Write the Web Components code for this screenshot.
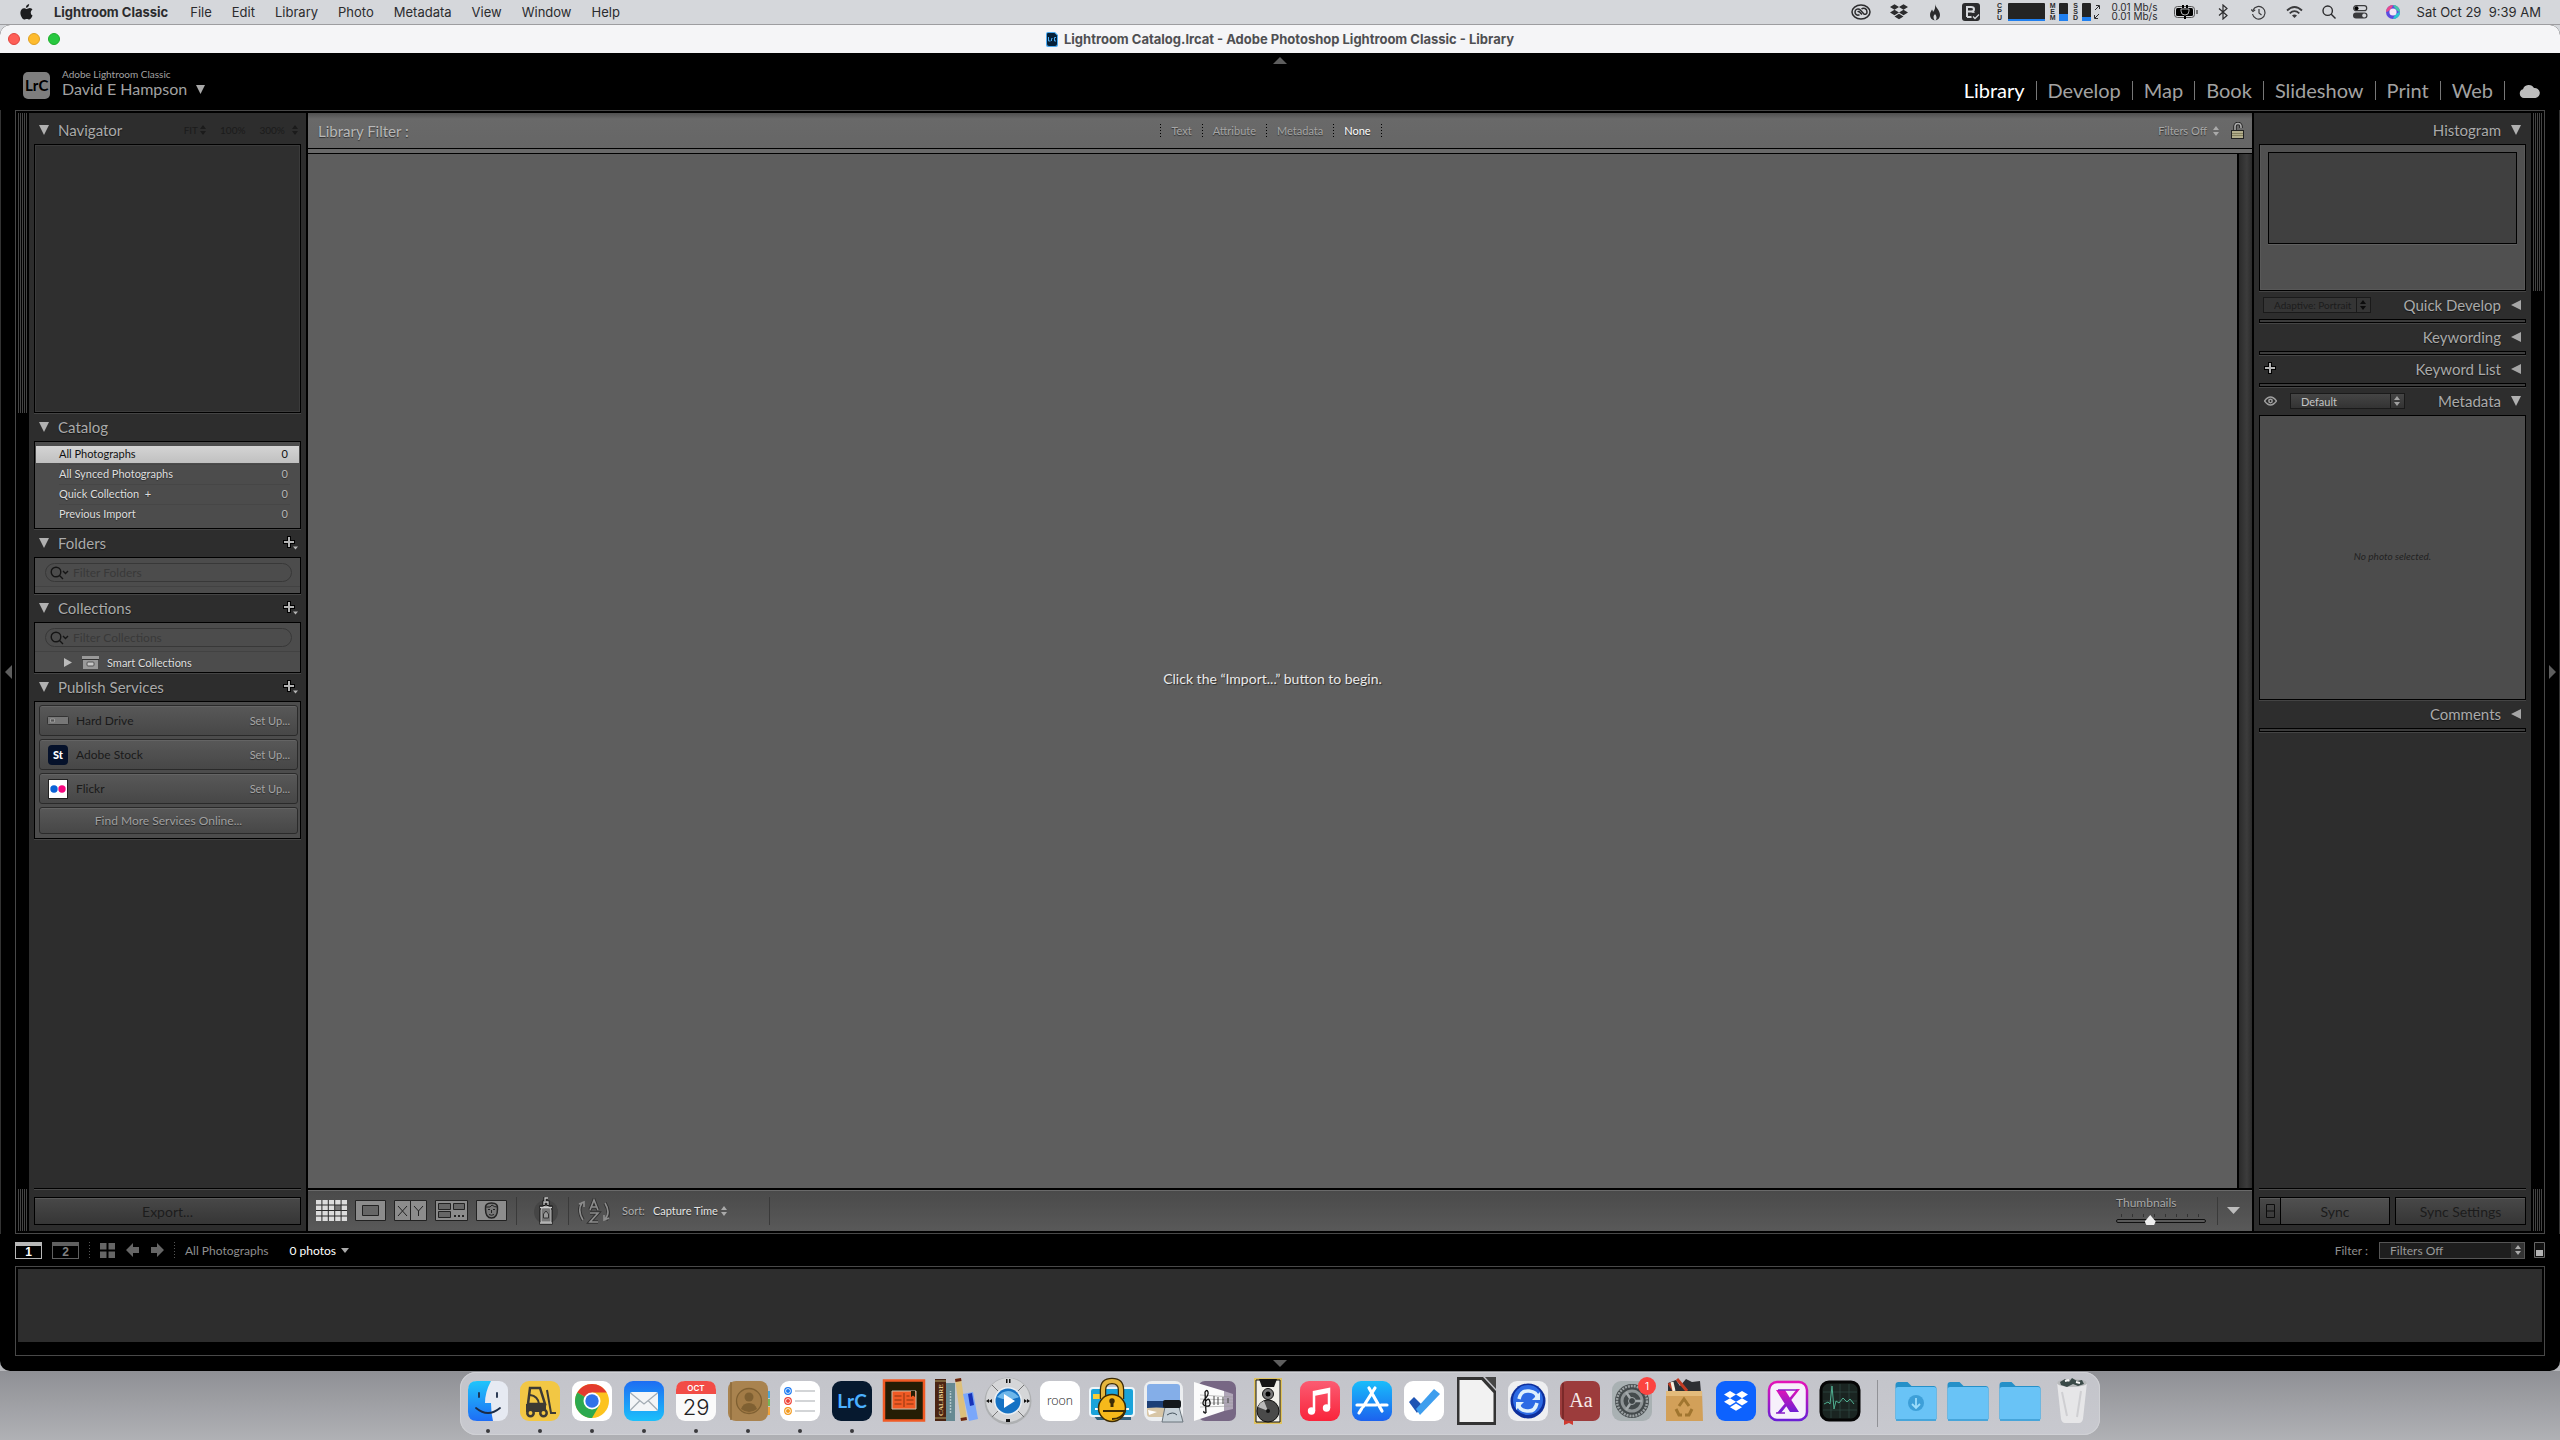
<!DOCTYPE html>
<html lang="en">
<head>
<meta charset="utf-8">
<title>Lightroom Catalog.lrcat - Adobe Photoshop Lightroom Classic - Library</title>
<style>
html, body { margin: 0; height: 100%; }
body { display: flex; flex-direction: column; background: linear-gradient(#d5d7db 0 60px, #b5b6ba 60px); font-family: Lato, "Liberation Sans", sans-serif; font-size: 11px; overflow: hidden; }
lr-window { flex: 1; min-height: 0; }
</style>
</head>
<body>
<mac-menu-bar></mac-menu-bar>
<lr-window>
  <lr-header></lr-header>
  <lr-workspace>
    <lr-left-panel slot="left"></lr-left-panel>
    <lr-library></lr-library>
    <lr-right-panel slot="right"></lr-right-panel>
  </lr-workspace>
  <lr-filmstrip></lr-filmstrip>
</lr-window>
<mac-dock></mac-dock>

<script>
const BASE = `
:host, *, *::before, *::after { box-sizing: border-box; }
svg { display: block; flex: none; }
button, input, select { font: inherit; color: inherit; margin: 0; padding: 0; border: 0; background: none; border-radius: 0; text-align: inherit; }
select { appearance: none; }
a { color: inherit; text-decoration: none; }
ul { list-style: none; margin: 0; padding: 0; }
p, h1, h2 { margin: 0; font-weight: inherit; font-size: inherit; }
.grow { flex: 1; }
.dots { width: 1px; height: 14px; background: repeating-linear-gradient(#000 0 1px, transparent 1px 3px); }
`;
function define(name, css, html, setup) {
  const template = document.createElement('template');
  template.innerHTML = `<style>${BASE}${css}</style>${html}`;
  customElements.define(name, class extends HTMLElement {
    constructor() {
      super();
      this.attachShadow({ mode: 'open' }).append(template.content.cloneNode(true));
    }
    connectedCallback() { if (setup) setup.call(this, this.shadowRoot); }
  });
}
const UPDOWN = (c = '#bbb') => `<svg width="6" height="10" viewBox="0 0 6 10" fill="${c}"><path d="M3 0l3 4H0zM3 10l3-4H0z"/></svg>`;
const DROPBOX = c => `<path fill="${c}" d="M5 0l5 3-5 3-5-3zM15 0l5 3-5 3-5-3zM5 6l5 3-5 3-5-3zM15 6l5 3-5 3-5-3zM10 10.500l5 3-5 3-5-3z"/>`;

/* ---------- Menu bar ---------- */
define('mac-menu-bar', `
:host { display: flex; align-items: center; height: 25px; flex: none; padding: 0 19px 0 20px; background: #d5d7db; border-bottom: 1px solid #9d9da0; color: #2b2b2d; font: 13px/24px Inter, "Liberation Sans", sans-serif; }
nav { display: flex; gap: 20px; margin-left: 21px; }
nav a:first-child { font-weight: 700; margin-right: 2px; }
.status { display: flex; align-items: center; margin-left: auto; }
.cell { display: flex; justify-content: center; align-items: center; width: 36px; }
.cell.first { width: 40px; }
.cell.narrow { width: 32px; }
.stack { font: 700 7px/6px "Liberation Sans", sans-serif; width: 6px; text-align: center; white-space: pre-line; margin-left: 2px; }
.stack.cpu { margin-left: 8px; }
.meter { width: 9px; height: 18px; background: #242424; border-radius: 1px; display: flex; align-items: flex-end; margin: 0 3px; }
.meter.wide { width: 37px; margin-left: 5px; }
.meter i { display: block; width: 100%; background: #1f7ff0; }
.rate { font-size: 10px; line-height: 9px; margin: 0 12px; width: 50px; }
time { margin-left: 8px; white-space: pre; }
`, `
<svg width="13" height="16" viewBox="0 0 14 17" fill="#1d1d1f"><path d="M9.800 0c.1 1.100-.3 2.100-.9 2.800-.7.8-1.600 1.300-2.500 1.200-.1-1 .4-2 .9-2.700C8 .6 9 .1 9.800 0zM13.500 12.400c-.6 1.800-2 4.200-3.400 4.200-1 0-1.500-.6-2.800-.6s-1.700.6-2.700.6C2.900 16.600.4 12.700.4 9.300c0-3.100 2-4.900 3.900-4.900 1.200 0 2.200.8 3 .8.700 0 1.900-.9 3.400-.9 1 .1 2 .5 2.700 1.500-2.600 1.700-2.200 5.300.1 6.600z"/></svg>
<nav aria-label="Menu"><a href="#">Lightroom Classic</a><a href="#">File</a><a href="#">Edit</a><a href="#">Library</a><a href="#">Photo</a><a href="#">Metadata</a><a href="#">View</a><a href="#">Window</a><a href="#">Help</a></nav>
<div class="status">
  <div class="cell first"><svg width="20" height="16" viewBox="0 0 20 16" fill="none" stroke="#2b2b2d" stroke-width="1.500"><ellipse cx="10" cy="8" rx="9" ry="7"/><path d="M8.500 10.800c-2.500 1-4.500-.5-4.500-2.800 0-3 3.500-4 5.500-1.800l3.200 3.600c1.500 1.200 3.300.2 3.300-1.800 0-3.500-3.500-4.700-5.500-3"/><path d="M6.800 8.200c.5-1 1.300-.8 2 0L11 10.600"/></svg></div>
  <div class="cell"><svg width="18" height="16" viewBox="0 0 20 17">${DROPBOX('#2b2b2d')}</svg></div>
  <div class="cell"><svg width="12" height="17" viewBox="0 0 12 17"><path fill="#2b2b2d" d="M6 0c.5 3.500 5 6 5 11 0 3-2 5-4.500 5.500C8 15 8 12 6 10c-.5 1-1.500 1.500-1.500 3 0 1.500.7 2.500 1.200 3.500C3 16 1 14 1 11c0-3 1.500-4 2-5.500.7.700 1 1.500 1 2.500C6 6 6.500 3 6 0z"/></svg></div>
  <div class="cell"><svg width="18" height="18" viewBox="0 0 18 18"><rect width="18" height="18" rx="3" fill="#2b2b2d"/><path d="M5 3v11M5 4h4c4 0 4 4.500 0 4.500H5M9 8.500c5 0 4 5.500 0 5.500H5" stroke="#d5d7db" stroke-width="2" fill="none"/><circle cx="13.500" cy="13.500" r="4" fill="#2b2b2d"/><path d="M11 13.500l2 2 4-4" stroke="#d5d7db" stroke-width="1.300" fill="none"/></svg></div>
  <div class="stack cpu">C
P
U</div><div class="meter wide"><i style="height:2px"></i></div>
  <div class="stack">M
E
M</div><div class="meter"><i style="height:7px"></i></div>
  <div class="stack">S
S
D</div><div class="meter"><i style="height:4px"></i></div>
  <svg width="6" height="14" viewBox="0 0 6 14" stroke="#2b2b2d" fill="none"><path d="M1 5l4-4M2 .5h3.500V4M5 9l-4 4M.5 10v3.500H4"/></svg>
  <div class="rate">0.01 Mb/s<br>0.01 Mb/s</div>
  <svg width="25" height="14" viewBox="0 0 25 14"><rect x=".5" y="1.500" width="20" height="11" rx="3" fill="#d5d7db" stroke="#555"/><rect x="2" y="3" width="17" height="8" rx="1.500"/><path d="M23 5v4" stroke="#555" stroke-width="1.500"/><path d="M9 0v4M13 0v4M11 9v5" stroke="#000" stroke-width="2"/><path d="M7 4h8v2q0 4-4 4T7 6z" stroke="#d5d7db" stroke-width=".8"/></svg>
  <div class="cell" style="margin-left:6px"><svg width="10" height="16" viewBox="0 0 10 16" fill="none" stroke="#2b2b2d" stroke-width="1.200"><path d="M1 4.500l8 7L5 15V1l4 3.500-8 7"/></svg></div>
  <div class="cell"><svg width="15" height="15" viewBox="0 0 15 15" fill="none" stroke="#3a3a3c" stroke-width="1.200"><path d="M2 5a6.300 6.300 0 1 1-.5 4"/><path d="M.2 4.500L2 6.500l2.200-1.700M8 4v4l2.500 2"/></svg></div>
  <div class="cell"><svg width="17" height="13" viewBox="0 0 17 13" fill="none" stroke="#3a3a3c" stroke-width="1.800"><path d="M1 4.500q7.500-7 15 0M3.700 7.300q4.800-4.300 9.600 0"/><path d="M6 9.500q2.500-2 5 0L8.500 12z" fill="#3a3a3c" stroke="none"/></svg></div>
  <div class="cell narrow"><svg width="14" height="14" viewBox="0 0 14 14" fill="none" stroke="#2b2b2d" stroke-width="1.400"><circle cx="5.700" cy="5.700" r="4.700"/><path d="M9 9l4.500 4.500"/></svg></div>
  <div class="cell narrow"><svg width="15" height="14" viewBox="0 0 15 14"><rect x=".7" y=".7" width="13" height="5" rx="2.500" fill="none" stroke="#3a3a3c" stroke-width="1.200"/><circle cx="3.500" cy="3.200" r="2"/><rect y="7.500" width="14.500" height="6" rx="3" fill="#3a3a3c"/><circle cx="11.200" cy="10.500" r="2" fill="#d5d7db"/></svg></div>
  <div class="cell narrow"><svg width="14" height="14" viewBox="0 0 14 14"><circle cx="7" cy="7" r="7" fill="#5a4be0"/><path d="M7 0a7 7 0 0 0-7 7c2 0 6-3 7-7z" fill="#e64a8d"/><path d="M7 14a7 7 0 0 0 7-7c-2 0-6 3-7 7z" fill="#2bc5cf"/><path d="M7 0a7 7 0 0 1 7 7c-2 0-5-3-7-7z" fill="#42c7a8"/><circle cx="7" cy="7" r="3.600" fill="#f4e8f6"/></svg></div>
  <time>Sat Oct 29  9:39 AM</time>
</div>`);

/* ---------- Application window ---------- */
define('lr-window', `
:host { display: flex; flex-direction: column; background: #000; border-radius: 10px; overflow: hidden; }
.title { display: flex; align-items: center; height: 28px; flex: none; background: #f5f5f7; color: #4f4f52; font: 700 13px/28px Inter, "Liberation Sans", sans-serif; padding: 0 8px; }
.lights { display: flex; gap: 8px; flex: 1; }
.lights button { width: 12px; height: 12px; border-radius: 50%; background: #fe5f57; border: 1px solid #e0443e; }
.lights button:nth-child(2) { background: #febb2e; border-color: #dfa023; }
.lights button:nth-child(3) { background: #28c840; border-color: #1dad2b; }
h1 { display: flex; align-items: center; gap: 6px; }
`, `
<div class="title"><div class="lights"><button aria-label="Close"></button><button aria-label="Minimize"></button><button aria-label="Zoom"></button></div>
<h1><svg width="12" height="15" viewBox="0 0 12 15"><path d="M2 0h7l3 3v10q0 2-2 2H2q-2 0-2-2V2q0-2 2-2z" fill="#4ba9f0"/><path d="M2 1h6.500L11 3.500V12q0 2-2 2H3q-2 0-2-2V2q0-1 1-1z" fill="#062038"/><path d="M2.500 5v4h2M5.500 9V6.500h1M10 5.500H8.500v3.500H10" stroke="#4ba9f0" fill="none"/></svg>Lightroom Catalog.lrcat - Adobe Photoshop Lightroom Classic - Library</h1><div class="grow"></div></div>
<slot></slot>`);

define('lr-header', `
:host { display: block; height: 57px; flex: none; color: #a2a2a2; }
.tab { display: flex; justify-content: center; height: 11px; align-items: flex-end; }
.row { display: flex; align-items: center; padding: 0 20px 0 23px; height: 43px; }
.id { margin: 0 0 4px 12px; line-height: 16px; }
.id small { display: block; font-size: 10px; line-height: 11px; }
.id button { display: flex; align-items: center; gap: 9px; font-size: 16px; line-height: 18px; }
nav { display: flex; align-items: center; margin-left: auto; padding-top: 10px; font-size: 20px; line-height: 24px; }
nav a { padding: 0 11px; border-right: 1px solid #777; line-height: 19px; }
nav a.on { color: #fff; }
nav svg { margin-left: 14px; }
`, `
<div class="tab"><svg width="14" height="7" viewBox="0 0 14 7"><path d="M7 0l7 7H0z" fill="#5e5e5e"/></svg></div>
<div class="row">
<svg width="27" height="27" viewBox="0 0 27 27"><rect width="27" height="27" rx="5" fill="#7e7e7e"/><text x="2" y="19" font-family="Lato" font-size="15" font-weight="700" fill="#000">LrC</text></svg>
<div class="id"><small>Adobe Lightroom Classic</small><button>David E Hampson<svg width="9" height="9" viewBox="0 0 9 9"><path d="M0 0h9L4.500 9z" fill="#a8a8a8"/></svg></button></div>
<nav><a class="on" href="#">Library</a><a href="#">Develop</a><a href="#">Map</a><a href="#">Book</a><a href="#">Slideshow</a><a href="#">Print</a><a href="#">Web</a>
<svg width="21" height="14" viewBox="0 0 21 14"><path d="M5 14a4.500 4.500 0 0 1-1-8.800A6 6 0 0 1 15 4a5 5 0 0 1 1.500 10z" fill="#bcbcbc"/></svg></nav>
</div>`);

define('lr-workspace', `
:host { display: flex; flex: 1; min-height: 0; }
.edge { width: 15px; flex: none; display: flex; align-items: center; justify-content: center; border: 0 solid #333; }
.edge.l { border-left-width: 1px; }
.edge.r { border-right-width: 1px; }
.frame { flex: 1; min-width: 0; display: flex; border: 1px solid #484848; padding: 2px 0; gap: 2px; }
.side { display: flex; }
.strip { width: 13px; display: flex; flex-direction: column; justify-content: space-between; align-items: center; }
.strip i { width: 9px; height: 42px; background: repeating-linear-gradient(90deg, #444 0 1px, #000 1px 2px); }
.strip i:first-child { height: 300px; }
.right .strip i:first-child { height: 178px; }
`, `
<div class="edge l"><svg width="7" height="14" viewBox="0 0 7 14"><path d="M7 0v14L0 7z" fill="#5e5e5e"/></svg></div>
<div class="frame">
<div class="side left"><div class="strip"><i></i><i></i></div><slot name="left"></slot></div>
<slot></slot>
<div class="side right"><slot name="right"></slot><div class="strip"><i></i><i></i></div></div>
</div>
<div class="edge r"><svg width="7" height="14" viewBox="0 0 7 14"><path d="M0 0v14l7-7z" fill="#5e5e5e"/></svg></div>`);

/* ---------- Collapsible panel section ---------- */
define('lr-section', `
:host { display: block; }
header { display: flex; align-items: center; height: 28px; padding: 0 3px 0 5px; color: #aaa; }
h2 { font-size: 15px; line-height: 24px; }
h2 button { display: flex; align-items: center; gap: 9px; text-shadow: 0 1px 1px #0008; }
.tools { flex: 1; display: flex; align-items: center; justify-content: flex-end; }
:host([side=right]) header { flex-direction: row-reverse; padding: 0 5px 0 4px; }
:host([side=right]) h2 button { flex-direction: row-reverse; gap: 10px; }
:host([side=right]) .tools { justify-content: flex-start; }
.box { border: 1px solid #000; background: #4c4c4c; box-shadow: 0 1px #444; }
:host([closed]) .box { height: 4px; background: #3c3c3c; }
.open, .shut { display: block; }
:host([closed]) .open, :host(:not([closed])) .shut { display: none; }
`, `
<header><h2><button><svg class="open" width="10" height="10" viewBox="0 0 10 10"><path d="M0 0h10L5 10z" fill="#b0b0b0"/></svg><svg class="shut" width="10" height="10" viewBox="0 0 10 10"><path d="M10 0v10L0 5z" fill="#a5a5a5"/></svg><span></span></button></h2><div class="tools"><slot name="tools"></slot></div></header>
<div class="box"><slot></slot></div>`, function (root) {
  root.querySelector('span').textContent = this.getAttribute('heading');
});

define('lr-plus', `
:host { display: block; } button { display: block; }
`, `<button aria-label="Add"><svg width="15" height="14" viewBox="0 0 15 14"><path d="M6 0v12M0 6h12" stroke="#000" stroke-width="4"/><path d="M6 1v10M1 6h10" stroke="#b4b4b4" stroke-width="2"/><path class="m" d="M10 10.500h5l-2.500 3z" fill="#b4b4b4"/></svg></button>`, function (root) {
  if (this.hasAttribute('plain')) root.querySelector('.m').remove();
});

define('lr-search', `
:host { display: block; padding: 5px 8px 4px 10px; border-bottom: 1px solid #424242; }
label { display: flex; align-items: center; gap: 4px; height: 19px; border: 1px solid #383838; border-radius: 10px; padding: 0 4px; }
input { flex: 1; min-width: 0; height: 17px; outline: 0; font-size: 12px; }
input::placeholder { color: #393939; opacity: 1; }
`, `<label><svg width="19" height="14" viewBox="0 0 19 14" fill="none" stroke="#151515" stroke-width="1.400"><circle cx="6" cy="6" r="4.800"/><path d="M9.500 9.500L13 13M13 5l2.500 2.500L18 5"/></svg><input type="text"></label>`, function (root) {
  const input = root.querySelector('input');
  input.placeholder = this.getAttribute('placeholder');
  input.setAttribute('aria-label', input.placeholder);
});

define('lr-panel-footer', `
:host { display: flex; gap: 5px; border-top: 1px solid #000; box-shadow: inset 0 1px #4a4a4a; padding: 8px 0 6px; margin: auto 5px 0; height: 43px; flex: none; }
`, `<slot></slot>`);

define('lr-button', `
:host { display: flex; flex: 1; }
button { flex: 1; height: 28px; border: 1px solid #000; background: linear-gradient(#484848, #363636); text-align: center; font-size: 14px; color: #1c1c1c; box-shadow: inset 0 1px #5a5a5a; }
:host([switch]) button:last-child { background: linear-gradient(#505050, #3e3e3e); }
.sw { flex: none; width: 21px; border-right: 0; display: flex; align-items: center; justify-content: center; }
:host(:not([switch])) .sw { display: none; }
`, `<button class="sw" aria-label="Auto sync"><svg width="9" height="14" viewBox="0 0 9 14"><path d="M.5.5h8v13h-8zM.5 7h8" fill="none" stroke="#0c0c0c"/></svg></button><button><slot></slot></button>`);

define('lr-left-panel', `
:host { display: flex; flex-direction: column; width: 277px; background: #2d2d2d; padding-top: 3px; }
lr-section { margin: 0 5px; }
.zoom { display: flex; gap: 14px; font-size: 10px; color: #1b1b1b; align-items: center; } .zoom span { display: flex; gap: 2px; align-items: center; }
.nav { height: 267px; background: #2f2f2f; border: 1px solid #3b3b3b; }
.catalog { padding: 2px 0 4px; }
.catalog a { display: flex; justify-content: space-between; height: 20px; line-height: 20px; padding: 0 12px 0 24px; color: #dedede; text-shadow: 0 1px 1px #0006; }
.catalog span:last-child { color: #b5b5b5; }
.catalog li + li a { background: linear-gradient(#464646, #464646) 24px 0 / calc(100% - 34px) 1px no-repeat; }
.catalog a.on { background: linear-gradient(#d4d4d4, #c0c0c0) 1px 2px / calc(100% - 2px) 17px no-repeat; color: #111; text-shadow: none; }
.catalog a.on span:last-child { color: #111; }
.end { height: 6px; }
.tree { display: flex; align-items: center; width: 100%; height: 20px; padding: 0 0 0 29px; color: #dedede; text-shadow: 0 1px 1px #0006; }
.tree svg + svg { margin: 0 8px 0 10px; }
.pub { padding: 3px 2px 4px 4px; display: grid; gap: 3px; }
.pub button { height: 31px; display: flex; align-items: center; border: 1px solid #2a2a2a; border-radius: 3px; background: linear-gradient(#585858, #474747); box-shadow: inset 0 1px #646464; padding: 0 7px; }
.pub b { width: 22px; display: flex; justify-content: center; margin-right: 7px; font-weight: 400; }
.pub .name { flex: 1; font-size: 12px; color: #1a1a1a; }
.pub .set { color: #a6a6a6; font-size: 11px; text-shadow: 0 1px 1px #0006; }
.pub button.more { height: 27px; justify-content: center; font-size: 12px; color: #a0a0a0; text-shadow: 0 1px 1px #0008; }
`, `
<lr-section heading="Navigator"><div class="zoom" slot="tools"><span>FIT ${UPDOWN('#1b1b1b')}</span><span>100%</span><span>300% &nbsp;${UPDOWN('#1b1b1b')}</span></div><div class="nav"></div></lr-section>
<lr-section heading="Catalog"><ul class="catalog"><li><a class="on" href="#"><span>All Photographs</span><span>0</span></a></li><li><a href="#"><span>All Synced Photographs</span><span>0</span></a></li><li><a href="#"><span>Quick Collection &nbsp;+</span><span>0</span></a></li><li><a href="#"><span>Previous Import</span><span>0</span></a></li></ul></lr-section>
<lr-section heading="Folders"><lr-plus slot="tools"></lr-plus><lr-search placeholder="Filter Folders"></lr-search><div class="end"></div></lr-section>
<lr-section heading="Collections"><lr-plus slot="tools"></lr-plus><lr-search placeholder="Filter Collections"></lr-search>
<button class="tree"><svg width="8" height="9" viewBox="0 0 8 9"><path d="M0 0l8 4.500L0 9z" fill="#bbb"/></svg><svg width="17" height="13" viewBox="0 0 17 13"><path d="M0 0h17v3H0zM1 4h15v9H1z" fill="#999"/><path d="M0 3.500h17" stroke="#333"/><rect x="5" y="6" width="7" height="4" rx="1" fill="#c8c8c8" stroke="#555"/></svg>Smart Collections</button></lr-section>
<lr-section heading="Publish Services"><lr-plus slot="tools"></lr-plus><div class="pub">
<button><b><svg width="22" height="9" viewBox="0 0 22 9"><rect x=".5" y=".5" width="21" height="8" rx="1" fill="#777" stroke="#333"/><path d="M3.500 3h4v3h-4z" fill="#555" stroke="#aaa" stroke-width=".7"/></svg></b><span class="name">Hard Drive</span><span class="set">Set Up...</span></button>
<button><b><svg width="20" height="20" viewBox="0 0 20 20"><rect width="20" height="20" rx="4" fill="#05112a"/><text x="10" y="14" text-anchor="middle" font-family="Lato" font-size="11" font-weight="900" fill="#fff">St</text></svg></b><span class="name">Adobe Stock</span><span class="set">Set Up...</span></button>
<button><b><svg width="20" height="20" viewBox="0 0 20 20"><rect width="20" height="20" fill="#222"/><rect x="1" y="1" width="18" height="18" fill="#fff"/><circle cx="6" cy="10" r="3.700" fill="#0b62d6"/><circle cx="14" cy="10" r="3.700" fill="#f7087f"/></svg></b><span class="name">Flickr</span><span class="set">Set Up...</span></button>
<button class="more">Find More Services Online...</button></div></lr-section>
<lr-panel-footer><lr-button>Export...</lr-button></lr-panel-footer>`);

define('lr-right-panel', `
:host { display: flex; flex-direction: column; width: 277px; background: #2d2d2d; padding-top: 3px; }
lr-section { margin: 0 5px; }
.hist { height: 145px; padding: 7px; border: 1px solid #585858; background: #505050; border-top-width: 0; }
.hist div { height: 92px; border: 1px solid #000; background: #404040; box-shadow: 0 1px #606060; }
.meta { height: 283px; display: flex; align-items: center; justify-content: center; padding-bottom: 4px; font-style: italic; font-size: 10px; color: #222; }
.pick { position: relative; display: flex; align-items: center; height: 16px; border: 1px solid #1a1a1a; background: linear-gradient(#454545, #333); width: 108px; }
.pick select { width: 100%; height: 14px; padding: 0 0 0 10px; font-size: 11px; color: #c4c4c4; }
.pick svg { position: absolute; right: 4px; }
.pick::after { content: ""; position: absolute; right: 13px; top: 0; bottom: 0; border-left: 1px solid #1a1a1a; }
.pick.off { background: #353535; } .pick.off select { color: #1c1c1c; opacity: 1; font-size: 10px; }
.wide { width: 115px; margin-left: 13px; }
lr-plus { margin-left: 1px; }
.eye { margin-left: 1px; }
`, `
<lr-section side="right" heading="Histogram"><div class="hist"><div></div></div></lr-section>
<lr-section side="right" closed heading="Quick Develop"><div class="pick off" slot="tools"><select aria-label="Preset" disabled><option>Adaptive: Portrait</option></select>${UPDOWN('#0c0c0c')}</div></lr-section>
<lr-section side="right" closed heading="Keywording"></lr-section>
<lr-section side="right" closed heading="Keyword List"><lr-plus plain slot="tools"></lr-plus></lr-section>
<lr-section side="right" heading="Metadata"><svg class="eye" slot="tools" width="13" height="10" viewBox="0 0 13 10"><path d="M.5 5q6-8 12 0-6 8-12 0z" fill="none" stroke="#a0a0a0" stroke-width="1.400"/><circle cx="6.500" cy="5" r="2.400" fill="#a0a0a0"/><circle cx="6.500" cy="5" r=".9" fill="#222"/></svg><div class="pick wide" slot="tools"><select aria-label="Metadata preset"><option>Default</option></select>${UPDOWN('#a0a0a0')}</div><div class="meta">No photo selected.</div></lr-section>
<lr-section side="right" closed heading="Comments"></lr-section>
<lr-panel-footer><lr-button switch>Sync</lr-button><lr-button>Sync Settings</lr-button></lr-panel-footer>`);

/* ---------- Library grid with filter bar and toolbar ---------- */
define('lr-library', `
:host { flex: 1; min-width: 0; display: flex; flex-direction: column; background: #5e5e5e; }
.filter { display: flex; align-items: center; height: 35px; padding: 0 8px 0 10px; background: linear-gradient(#505050, #696969 6px, #666); color: #b8b8b8; text-shadow: 0 1px 1px #0008; }
.filter > * { flex: 1; }
.filter .title { font-size: 15px; }
.filter nav { flex: none; display: flex; align-items: center; gap: 10px; margin-right: 20px; font-size: 11px; color: #a6a6a6; }
.filter nav .on { color: #fff; }
.state { display: flex; align-items: center; justify-content: flex-end; font-size: 11px; color: #a8a8a8; gap: 6px; }
.state svg:last-child { margin-left: 6px; }
.rule { height: 6px; flex: none; border: 1px solid #000; border-width: 1px 0; background: #696969; }
.body { flex: 1; display: flex; }
.canvas { flex: 1; display: flex; align-items: center; justify-content: center; padding-top: 14px; font-size: 14px; color: #eaeaea; text-shadow: 1px 1px 1px #0008; }
.scroll { width: 15px; background: linear-gradient(90deg, #2b2b2b, #3c3c3c 60%, #2b2b2b); border-left: 2px solid #000; }
.tools { display: flex; align-items: center; height: 43px; flex: none; border-top: 2px solid #000; background: linear-gradient(#6a6a6a 0 1px, #4a4a4a 1px, #595959); padding: 0 12px 0 8px; color: #a8a8a8; text-shadow: 0 1px 1px #0008; }
.views { display: flex; gap: 8px; }
.sep { width: 1px; height: 28px; background: #3a3a3a; flex: none; }
.sort { display: flex; align-items: center; gap: 8px; color: #b0b0b0; }
.sort select { color: #e4e4e4; width: 68px; text-shadow: inherit; font-size: 11px; }
.sort .s { display: flex; align-items: center; }
.sort label { margin-right: 8px; } .sort svg { margin-right: 4px; }
.thumbs { display: block; width: 90px; font-size: 12px; line-height: 14px; }
.thumbs label { display: block; }
.ticks { height: 3px; margin: 4px 5px 0; background: repeating-linear-gradient(90deg, #333 0 1px, transparent 1px 11px); }
input[type=range] { appearance: none; display: block; width: 90px; height: 9px; }
input[type=range]::-webkit-slider-runnable-track { height: 4px; border: 1px solid #111; border-radius: 2px; background: #5a5a5a; }
input[type=range]::-webkit-slider-thumb { appearance: none; width: 11px; height: 10px; margin-top: -5px; background: #eee; clip-path: polygon(50% 0, 100% 65%, 85% 100%, 15% 100%, 0 65%); }
`, `
<div class="filter"><span class="title">Library Filter :</span>
<nav><i class="dots"></i><a href="#">Text</a><i class="dots"></i><a href="#">Attribute</a><i class="dots"></i><a href="#">Metadata</a><i class="dots"></i><a class="on" href="#">None</a><i class="dots"></i></nav>
<div class="state">Filters Off ${UPDOWN('#aaa')}<svg width="13" height="17" viewBox="0 0 13 17"><path d="M4 8V4.500a3 3 0 0 1 6 0V6" fill="none" stroke="#222" stroke-width="3.500"/><path d="M4 8V4.500a3 3 0 0 1 6 0V6" fill="none" stroke="#aaa" stroke-width="1.600"/><rect x=".5" y="8.500" width="12" height="8" fill="#b3ae8c" stroke="#222"/><path d="M1 11.500h11M1 13.500h11" stroke="#85815f"/></svg></div></div>
<div class="rule"></div>
<div class="body"><div class="canvas">Click the “Import...” button to begin.</div><div class="scroll"></div></div>
<div class="tools">
<div class="views">
<button aria-label="Grid"><svg width="31" height="21" viewBox="0 0 31 21"><rect width="31" height="21" fill="#2a2a2a"/><path d="M0 0h5.400v4.500H0zM6.400 0h5.400v4.500H6.400zM12.800 0h5.400v4.500h-5.400zM19.200 0h5.400v4.500h-5.400zM25.600 0H31v4.500h-5.400zM0 5.500h5.400V10H0zM6.400 5.500h5.400V10H6.400zM12.800 5.500h5.400V10h-5.400zM25.600 5.500H31V10h-5.400zM0 11h5.400v4.500H0zM6.400 11h5.400v4.500H6.400zM12.800 11h5.400v4.500h-5.400zM19.200 11h5.400v4.500h-5.400zM25.600 11H31v4.500h-5.400zM0 16.500h5.400V21H0zM6.400 16.500h5.400V21H6.400zM12.800 16.500h5.400V21h-5.400zM19.200 16.500h5.400V21h-5.400zM25.600 16.500H31V21h-5.400z" fill="#dcdcdc"/><path d="M19.200 5.500h5.400V10h-5.400z" fill="#777"/></svg></button>
<button aria-label="Loupe"><svg width="31" height="21" viewBox="0 0 31 21"><path d="M.5.500h30v20H.5z" fill="#8c8c8c" stroke="#222"/><path d="M7.500 5.500h16v10h-16z" fill="#666" stroke="#222"/></svg></button>
<button aria-label="Compare"><svg width="33" height="21" viewBox="0 0 33 21"><path d="M.5.500h32v20H.5zM16.500 0v21" fill="#8c8c8c" stroke="#222"/><path d="M4 6l9 10M13 6L4 16M20 6l4.500 5L29 6M24.500 11v5" stroke="#222" fill="none"/></svg></button>
<button aria-label="Survey"><svg width="33" height="21" viewBox="0 0 33 21"><path d="M.5.500h32v20H.5z" fill="#8c8c8c" stroke="#222"/><path d="M3.500 3.500h12v6h-12zM18.500 3.500h11v6h-11zM3.500 11.500h12v6h-12z" fill="#666" stroke="#222"/><path d="M19 15h2v2h-2zM23 15h2v2h-2zM27 15h2v2h-2z" fill="#222"/></svg></button>
<button aria-label="People"><svg width="31" height="21" viewBox="0 0 31 21"><path d="M.5.500h30v20H.5z" fill="#8c8c8c" stroke="#222"/><path d="M9.500 9q-1-6 6-6t6 6q0 9-6 9t-6-9z" fill="#777" stroke="#222" stroke-width="1.500"/><path d="M10 7q5 1 6-2 2 2 5 2M12 9.500h2M17 9.500h2M15.500 10v3M13 14.500q2.500 1.500 5 0" fill="none" stroke="#222"/></svg></button>
</div>
<div class="sep" style="margin:0 16px 0 9px"></div>
<svg width="26" height="28" viewBox="0 0 26 28"><ellipse cx="13" cy="15" rx="12" ry="12" fill="#454545"/><path d="M6.500 10h13M8 26V13q0-3 5-4 5 1 5 4v13M6.500 26h13M11 8V5h4v3M12 4V1h3" fill="#777" stroke="#111" stroke-width="3"/><path d="M8 25V13q0-3 5-4 5 1 5 4v12z" fill="#777" stroke="#c4c4c4"/><path d="M7 10.500h12M7 26h12M11 8V5h4v3M12 4V1h3" fill="none" stroke="#ccc" stroke-width="1.300"/><path d="M13 14l2.500 3v4h-5v-4z" fill="#999" stroke="#333"/></svg>
<div class="sep" style="margin:0 9px 0 9px"></div>
<div class="sort"><svg width="32" height="26" viewBox="0 0 32 26"><g fill="none" stroke="#303030" stroke-width="3.500"><path d="M12 12l4-10 4 10M13.500 9h5M12 15h8l-8 9h8M5 22Q-1 12 4 5M27 5q6 10 1 17"/></g><g fill="none" stroke="#8c8c8c" stroke-width="1.600"><path d="M12 12l4-10 4 10M13.500 9h5M12 15h8l-8 9h8M5 22Q-1 12 4 5M1 6l5-2v5M27 5q6 10 0 16M31 20l-5 2v-5"/></g></svg><div class="s"><label for="sort">Sort:</label><select id="sort"><option>Capture Time</option></select>${UPDOWN('#aaa')}</div></div>
<div class="sep" style="margin-left:38px"></div>
<div class="grow"></div>
<div class="thumbs"><label for="size">Thumbnails</label><div class="ticks"></div><input id="size" type="range" value="36"></div>
<div class="sep" style="margin:0 9px 0 11px"></div>
<button aria-label="Toolbar content"><svg width="13" height="7" viewBox="0 0 13 7"><path d="M0 0h13L6.500 7z" fill="#bdbdbd"/></svg></button>
</div>`);

/* ---------- Filmstrip ---------- */
define('lr-filmstrip', `
:host { display: block; flex: none; color: #8e8e8e; font-size: 12px; }
.bar { display: flex; align-items: center; height: 32px; padding: 0 15px; }
.mon { width: 27px; height: 17px; border: 1px solid #606060; border-top-width: 4px; text-align: center; font: 700 12px/12px "Liberation Sans", sans-serif; color: #808080; }
.mon.on { border-color: #b8b8b8; color: #fff; }
.dots { background: repeating-linear-gradient(#555 0 1px, transparent 1px 3px); height: 17px; margin: 0 10px; }
.count { display: flex; align-items: center; gap: 5px; color: #fff; margin-left: 21px; }
.pick { position: relative; display: flex; align-items: center; width: 146px; height: 17px; border: 1px solid #555; background: #1e1e1e; margin: 0 9px 0 11px; }
.pick select { width: 100%; height: 15px; padding: 0 10px; color: #9a9a9a; }
.pick i { position: absolute; right: 0; width: 13px; height: 15px; background: #333; display: flex; align-items: center; justify-content: center; pointer-events: none; }
.film { height: 90px; margin: 0 15px; border: 1px solid #484848; padding: 2px 2px 13px; }
.film div { height: 73px; background: #2d2d2d; }
.tab { display: flex; justify-content: center; height: 15px; padding-top: 4px; }
`, `
<div class="bar"><button class="mon on">1</button><button class="mon" style="margin-left:10px">2</button><i class="dots"></i>
<button aria-label="Grid view"><svg width="15" height="15" viewBox="0 0 15 15"><path d="M0 0h6.500v6.500H0zM8.500 0H15v6.500H8.500zM0 8.500h6.500V15H0zM8.500 8.500H15V15H8.500z" fill="#666"/></svg></button>
<button aria-label="Back" style="margin:0 12px 0 11px"><svg width="13" height="14" viewBox="0 0 13 14"><path d="M0 7l7-7v4h6v6H7v4z" fill="#666"/></svg></button>
<button aria-label="Forward"><svg width="13" height="14" viewBox="0 0 13 14"><path d="M13 7L6 0v4H0v6h6v4z" fill="#666"/></svg></button>
<i class="dots"></i><span>All Photographs</span><button class="count">0 photos<svg width="8" height="5" viewBox="0 0 8 5"><path d="M0 0h8L4 5z" fill="#aaa"/></svg></button>
<div class="grow"></div><label for="filter">Filter :</label><div class="pick"><select id="filter"><option>Filters Off</option></select><i>${UPDOWN('#aaa')}</i></div>
<button aria-label="Filter switch"><svg width="11" height="16" viewBox="0 0 11 16"><path d="M.5.500h10v15H.5z" fill="#111" stroke="#666"/><path d="M2 8h7v6H2z" fill="#b5b5b5"/></svg></button></div>
<div class="film"><div></div></div>
<div class="tab"><svg width="14" height="7" viewBox="0 0 14 7"><path d="M7 7l7-7H0z" fill="#5e5e5e"/></svg></div>`);

/* ---------- Dock ---------- */
const tile = fill => `<rect x="4" y="4" width="40" height="40" rx="9" fill="${fill}"/>`;
const folder = extra => `<path d="M3.500 8q0-3 3-3h9l4 4h22q3 0 3 3v30h-41z" fill="#2590c8"/><rect x="3.500" y="10" width="41" height="34" rx="2.500" fill="#69c3f6"/><path d="M4 43h40" stroke="#3b9bd0" stroke-width="1.500"/>${extra}`;
const ICONS = {
  Finder: `<defs><linearGradient id="f" x2="0" y2="1"><stop stop-color="#20c5fb"/><stop offset="1" stop-color="#1e6df5"/></linearGradient></defs>${tile('#e6eaf2')}<path d="M13 4h14q-6 11-6 22h6q0 10 2 18H13q-9 0-9-9V13q0-9 9-9z" fill="url(#f)"/><path d="M15 16v4M33 16v4M12 31q12 10 24 0" stroke="#1b2b45" stroke-width="1.800" fill="none" stroke-linecap="round"/>`,
  Forklift: `${tile('#f2c744')}<path d="M12 27l2-16h10l5 16z" fill="none" stroke="#3c3a34" stroke-width="2.500"/><path d="M14 18q8 1 9 9" fill="none" stroke="#3c3a34" stroke-width="2"/><path d="M10 27h20v8H10z" fill="#3c3a34"/><path d="M31 13l4 23h5" fill="none" stroke="#3c3a34" stroke-width="2"/><circle cx="14.500" cy="36" r="3.200" fill="#f2c744" stroke="#3c3a34" stroke-width="2.500"/><circle cx="27.500" cy="36" r="3.200" fill="#f2c744" stroke="#3c3a34" stroke-width="2.500"/>`,
  Chrome: `${tile('#fff')}<circle cx="24" cy="24" r="17" fill="#fcc31e"/><path d="M24 24L9.300 15.500A17 17 0 0 1 38.700 15.500H24z" fill="#e33b2e"/><path d="M9.300 15.500A17 17 0 0 0 24 41l7.400-12.700L24 24z" fill="#2da94f"/><circle cx="24" cy="24" r="8.500" fill="#fff"/><circle cx="24" cy="24" r="6.700" fill="#2f72e8"/>`,
  Mail: `<defs><linearGradient id="m" x2="0" y2="1"><stop stop-color="#1e6df2"/><stop offset="1" stop-color="#1cc0fb"/></linearGradient></defs>${tile('url(#m)')}<rect x="10" y="15" width="28" height="19" rx="2" fill="#f3f5f7"/><path d="M10.500 16L24 27l13.500-11M10.500 33l9-9M37.500 33l-9-9" fill="none" stroke="#a3acb4" stroke-width="1.300"/>`,
  Calendar: `${tile('#fafafa')}<path d="M4 17v-4q0-9 9-9h22q9 0 9 9v4z" fill="#f24c46"/><text x="24" y="13.500" text-anchor="middle" font-family="Inter" font-weight="600" font-size="8" fill="#fff">OCT</text><text x="24" y="38" text-anchor="middle" font-family="Inter" font-weight="300" font-size="22" fill="#222">29</text>`,
  Contacts: `<path d="M42 14h4v7h-4z" fill="#4aa7d8"/><path d="M42 22h4v7h-4z" fill="#73b855"/><path d="M42 30h4v8h-4z" fill="#f0a23a"/><rect x="4" y="4" width="40" height="40" rx="8" fill="#a9834f"/><path d="M7 5v38" stroke="#8b6938" stroke-width="1.500"/><circle cx="25" cy="24" r="12.500" fill="#a27b46" stroke="#7f6032" stroke-width="1.300"/><circle cx="25" cy="20" r="4.500" fill="#7f6032"/><path d="M17 32q2-6 8-6t8 6q-8 6-16 0z" fill="#7f6032"/>`,
  Reminders: `${tile('#fff')}<path d="M19 14h20M19 24h20M19 34h20" stroke="#c5c7ca" stroke-width="1.300"/><g fill="none" stroke-width="1.200"><circle cx="12" cy="14" r="3.300" stroke="#1d7bf2"/><circle cx="12" cy="24" r="3.300" stroke="#ef4136"/><circle cx="12" cy="34" r="3.300" stroke="#f39a1d"/></g><circle cx="12" cy="14" r="2" fill="#1d7bf2"/><circle cx="12" cy="24" r="2" fill="#ef4136"/><circle cx="12" cy="34" r="2" fill="#f39a1d"/>`,
  Lightroom: `${tile('#06192f')}<text x="24" y="31" text-anchor="middle" font-family="Lato" font-weight="700" font-size="19" fill="#4bb0ff">LrC</text>`,
  Digital: `<path d="M4 3.500h40v40H4z" fill="#241d04" stroke="#f15a24" stroke-width="2.500"/><path d="M12 14h24v18H12z" fill="#f15a24" stroke="#c9c1ae"/><path d="M24 16v14M14.500 19h7M14.500 23h7M14.500 27h7M26.500 19h3M26.500 23h7M26.500 27h7" stroke="#8b350f"/><path d="M31 14v6l2-1.500 2 1.500v-6z" fill="#241d04"/>`,
  Calibre: `<path d="M3 2h11v42H3z" fill="#4a2413"/><path d="M3 4h11M3 41h11" stroke="#8d7648" stroke-width="1.500"/><path d="M14 6h9v38h-9z" fill="#668992"/><path d="M23 2l6-1 6 42-6 1z" fill="#ddc07b"/><path d="M23 2l6-1 .5 3-6 1zM28.500 41l6-1 .5 3-6 1z" fill="#6b2713"/><path d="M31 17l10-2 5 27-9 2z" fill="#7aa7fa"/><path d="M36 17l4-1 2 12-4 1z" fill="#1732b8"/><text transform="translate(11 39) rotate(-90)" font-family="Liberation Serif" font-weight="700" font-size="7" fill="#e8cf8d">CALIBRE</text><path d="M18.500 36V14" stroke="#b3c7cb" stroke-width="1.500" stroke-dasharray="2 1"/>`,
  Player: `<circle cx="24" cy="24" r="23.500" fill="#aeb0b2"/><circle cx="24" cy="23" r="22" fill="#d5d6d8"/><path d="M8 8l32 32M40 8L8 40" stroke="#777"/><circle cx="24" cy="24" r="14" fill="#e9eef2"/><circle cx="24" cy="24" r="12.500" fill="#1572c4"/><path d="M13 20q11-12 22 0-11 5-22 0z" fill="#6db7ea"/><path d="M20 17l11 7-11 7z" fill="#fff"/><path d="M22 2h1.500v4H22zM25 2h1.500v4H25zM22 42h4v3h-4zM2 24l3-2v4zM5 24l3-2v4zM46 24l-3-2v4zM43 24l-3-2v4z" fill="#111"/>`,
  Roon: `${tile('#fff')}<text x="24" y="28" text-anchor="middle" font-family="Lato" font-weight="300" font-size="13" fill="#222">roon</text>`,
  Wallet: `<path d="M5 38h38v5H9z" fill="#34617a"/><rect x="2" y="11" width="44" height="28" rx="3" fill="#1aa3da" stroke="#eef6fa" stroke-width="2"/><path d="M5 17h7v5H5z" fill="#f6ce3a"/><path d="M7 32h8M33 32h8" stroke="#fff" stroke-width="2"/><path d="M15 22v-9q0-9 9-9t9 9v9" stroke="#3c2b05" stroke-width="6.500" fill="none"/><path d="M15 22v-9q0-9 9-9t9 9v9" stroke="#e5b63e" stroke-width="4" fill="none"/><circle cx="24" cy="31" r="13.500" fill="#f6b91b" stroke="#3c2b05" stroke-width="1.500"/><path d="M22.500 24h3v6h-3z" fill="#3c2b05"/><path d="M15 34h22M37 34q-3 8-13 8" fill="none" stroke="#3c2b05" stroke-width="2"/><circle cx="24" cy="24" r="2.700" fill="#3c2b05"/>`,
  Preview: `<rect x="4" y="4" width="39" height="40" rx="8" fill="#eceef0"/><path d="M7 10q0-3 3-3h27q3 0 3 3v14H7z" fill="#84aee8"/><path d="M7 24h33v8H7z" fill="#1c3f77"/><path d="M7 31q16-2 33 3v3q0 3-3 3H10q-3 0-3-3z" fill="#d8c6a6"/><path d="M8 33l9 2-8 3z" fill="#fff"/><path d="M25 30h14l4 15H22z" fill="#c7d1d8" stroke="#6b757c"/><rect x="23" y="23" width="18" height="8" rx="2" fill="#15181c"/><path d="M27 38q6-4 10 0" stroke="#44515c" fill="none"/>`,
  Music: `<rect x="6" y="4" width="38" height="40" rx="7" fill="#776784"/><path d="M2 5l30 9v20L2 44z" fill="#fbfbfb"/><path d="M32 14l9 3v15l-9 2z" fill="#b0a6b8"/><path d="M8 18l33 2M8 22l33 1M8 26h33M8 30l33-1" stroke="#999" stroke-width=".6"/><path d="M14 36q-3 0-2-2M14 36l-1-21q2-3 3 0t-4 8q-3 5 2 6t4-4-4-1" fill="none" stroke="#111" stroke-width="1.300"/><path d="M22 19v9M26 20v8M31 20v7M36 21v5" stroke="#444"/>`,
  Speaker: `<path d="M10 1h28v46H10z" fill="#e0c35f"/><path d="M12 3h24v42H12z" fill="#f0efe9" stroke="#111"/><path d="M15 2h18l-3 8H18z" fill="#161616"/><circle cx="24" cy="17" r="5.500" fill="#777" stroke="#111"/><circle cx="24" cy="17" r="2.500"/><circle cx="24" cy="34" r="11" fill="#4a4a4a" stroke="#111"/><path d="M24 34L14 30a11 11 0 0 1 6-6z" fill="#b9b9b9"/><circle cx="24" cy="34" r="2" fill="#111"/>`,
  Tunes: `<defs><linearGradient id="t" x2="0" y2="1"><stop stop-color="#fb5c72"/><stop offset="1" stop-color="#f9243b"/></linearGradient></defs>${tile('url(#t)')}<path d="M18 34V15l15-3v19" fill="none" stroke="#fff" stroke-width="2.500"/><path d="M18 15l15-3v4l-15 3z" fill="#fff"/><circle cx="15.500" cy="34" r="3.700" fill="#fff"/><circle cx="30.500" cy="31" r="3.700" fill="#fff"/>`,
  Store: `<defs><linearGradient id="s" x2="0" y2="1"><stop stop-color="#19bdfb"/><stop offset="1" stop-color="#1c62ee"/></linearGradient></defs>${tile('url(#s)')}<path d="M21 11l13 23M27 11L15 30M9 28h19M33 28h6M13.500 32L11 36" stroke="#fff" stroke-width="3.200" stroke-linecap="round"/>`,
  Todo: `${tile('#fff')}<path d="M9 25l5-5 8 8-5 8z" fill="#1e54b4"/><path d="M16 32L34 12l6 5-20 21z" fill="#3e9eee"/>`,
  Office: `<path d="M5 0h26l13 14v34H5z" fill="#333"/><path d="M33 0h11v12z" fill="#454545"/><path d="M7.500 3h22l12 13v29h-34z" fill="#f2f2f2"/>`,
  Sync: `${tile('#eeeff1')}<circle cx="24" cy="24" r="17.500" fill="#0e2f9c"/><circle cx="24" cy="23" r="15" fill="#2c6ae4"/><path d="M15 22q2-9 10-8t8 6M33 26q-2 9-10 8t-8-6" fill="none" stroke="#def0fc" stroke-width="3.500"/><path d="M36 15v8h-8zM12 33v-8h8z" fill="#def0fc"/>`,
  Dictionary: `<path d="M8 42h9v6l-4-2-5 2z" fill="#cf3a30"/><rect x="4" y="4" width="40" height="40" rx="7" fill="#9c3c3c"/><path d="M7 6v36" stroke="#7b2929" stroke-width="2"/><text x="25" y="30" text-anchor="middle" font-family="Liberation Serif" font-size="20" fill="#f6e9e7">Aa</text>`,
  Settings: `${tile('#a9b1b3')}<circle cx="24" cy="24" r="17" fill="#444a4c"/><circle cx="24" cy="24" r="15" fill="none" stroke="#9aa0a2" stroke-width="2.500" stroke-dasharray="2 1"/><circle cx="24" cy="24" r="10" fill="none" stroke="#8e9496" stroke-width="3"/><path d="M24 24l10 0M24 24l-6-9M24 24l-6 9" stroke="#a3a9ab" stroke-width="2.500"/><circle cx="24" cy="24" r="3.500" fill="#3d4345" stroke="#a3a9ab"/><circle cx="39" cy="9" r="9" fill="#fc4440"/><text x="39" y="12.500" text-anchor="middle" font-family="Inter" font-size="10" fill="#fff">1</text>`,
  Bag: `<path d="M8 6l8-3 4 6 6-7 6 3 8-1 1 12H8z" fill="#2d2f33"/><path d="M9 6l5 8M17 2l10 12" stroke="#c23b22" stroke-width="3"/><path d="M12 5l2 9" stroke="#f5efe0" stroke-width="3"/><path d="M6 14h36l1 30H6z" fill="#d2a059"/><path d="M6 14h36v5H6z" fill="#e3bb7b"/><path d="M19 29l5-7 5 7M32 32l-3 6h-4M16 32l3 6h3" fill="none" stroke="#a0752f" stroke-width="3"/>`,
  Dropbox: `${tile('#0d62fe')}<g transform="translate(12 14) scale(1.200)">${DROPBOX('#fff')}</g>`,
  X: `<defs><linearGradient id="x" x2="0" y2="1"><stop stop-color="#e313b8"/><stop offset="1" stop-color="#6a1fd4"/></linearGradient></defs><rect x="5" y="5" width="38" height="38" rx="8" fill="#f6f0fb" stroke="url(#x)" stroke-width="2.500"/><path d="M12 13h9l14 22h-9zM33 12h3L17 36h-4z" fill="url(#x)"/><path d="M14 13h19M12 36h9" stroke="#8a1bc8" stroke-width="1.500"/>`,
  Activity: `<rect x="5" y="5" width="38" height="38" rx="8" fill="#1a2421" stroke="#050505" stroke-width="3"/><path d="M15 7v34M24 7v34M33 7v34M7 15h34M7 24h34M7 33h34" stroke="#33504a" stroke-width=".6"/><path d="M8 27l4-2 2 2 2-18 2 23 2-8 3 2 4-5 4 4 3-3 4 5" fill="none" stroke="#4fae90"/>`,
  Downloads: folder(`<circle cx="24" cy="26" r="8" fill="#3d9fd8"/><path d="M24 21v9M20 27l4 4 4-4" stroke="#9bdcfb" stroke-width="1.800" fill="none"/>`),
  Documents: folder(''), Projects: folder(''),
  Trash: `<path d="M9 5h30l-4 37q-1 4-4 4H17q-3 0-4-4z" fill="#e6e6e8"/><ellipse cx="24" cy="6" rx="15" ry="4" fill="#b7b9bb"/><path d="M12 5l5-3 4 3 3-4 5 3 5-1 2 4-6 2-5-2-6 3-6-2z" fill="#3a4a48"/><path d="M17 4l4-1M28 5l4 1" stroke="#f6f6f6" stroke-width="2"/><path d="M14 15l5 24M33 14l-4 26" stroke="#cfcfd2" stroke-width="2"/>`
};
define('dock-icon', `
:host { display: block; width: 52px; }
button { display: flex; flex-direction: column; align-items: center; width: 100%; }
i { width: 4px; height: 4px; border-radius: 2px; margin-top: 4px; background: #3a3a3d; visibility: hidden; }
:host([running]) i { visibility: visible; }
`, `<button><svg width="48" height="48" viewBox="0 0 48 48"></svg><i></i></button>`, function (root) {
  const app = this.getAttribute('app');
  root.querySelector('button').setAttribute('aria-label', app);
  root.querySelector('svg').innerHTML = ICONS[app];
});
define('mac-dock', `
:host { display: flex; justify-content: center; height: 69px; flex: none; padding: 1px 0 5px; background: linear-gradient(#8f9095, #b0b1b5); }
.dock { display: flex; padding: 5px 2px 0; border-radius: 16px; background: linear-gradient(#c3c4ca, #c8c9cf); box-shadow: inset 0 0 0 1px #d0d1d5; }
hr { width: 1px; height: 47px; margin: 3px 12px 0 11px; border: 0; background: #919297; }
`, `<div class="dock">${Object.keys(ICONS).map((n, i) => (i === 27 ? '<hr>' : '') + `<dock-icon app="${n}"${i < 8 ? ' running' : ''}></dock-icon>`).join('')}</div>`);
</script>
</body>
</html>
